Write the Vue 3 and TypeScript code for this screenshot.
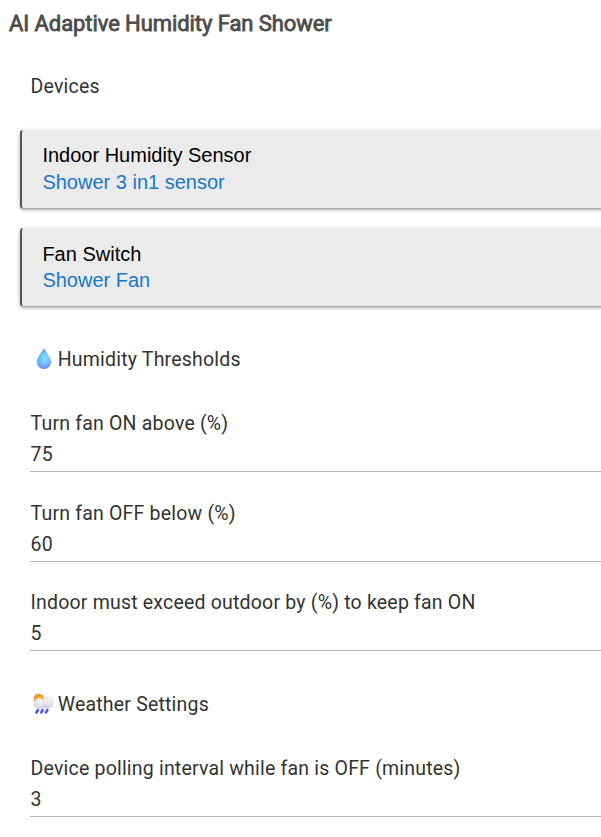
<script setup lang="ts">
interface Device {
  label: string
  value: string
}

interface Setting {
  label: string
  value: number
}

const devices: Device[] = [
  { label: 'Indoor Humidity Sensor', value: 'Shower 3 in1 sensor' },
  { label: 'Fan Switch', value: 'Shower Fan' },
]

const thresholds: Setting[] = [
  { label: 'Turn fan ON above (%)', value: 75 },
  { label: 'Turn fan OFF below (%)', value: 60 },
  { label: 'Indoor must exceed outdoor by (%) to keep fan ON', value: 5 },
]

const weather: Setting[] = [
  { label: 'Device polling interval while fan is OFF (minutes)', value: 3 },
]
</script>

<template>
  <main class="page">
    <h1 class="title">AI Adaptive Humidity Fan Shower</h1>

    <h2 class="section devices-heading">Devices</h2>
    <div class="devices">
      <button v-for="d in devices" :key="d.label" class="device" type="button">
        <span class="device-label">{{ d.label }}</span>
        <span class="device-value">{{ d.value }}</span>
      </button>
    </div>

    <h2 class="section icon-section humidity-heading">
      <svg class="icon" width="27" height="24" viewBox="0 0 27 24" aria-hidden="true">
        <defs>
          <linearGradient id="drop" x1="0.3" y1="0" x2="0.6" y2="1">
            <stop offset="0" stop-color="#559fd6" />
            <stop offset="0.55" stop-color="#5cbcfb" />
            <stop offset="0.8" stop-color="#6f9cfb" />
            <stop offset="1" stop-color="#7a7ffb" />
          </linearGradient>
          <radialGradient id="glow" cx="0.58" cy="0.48" r="0.45">
            <stop offset="0" stop-color="#84dcff" />
            <stop offset="0.5" stop-color="#80d8ff" stop-opacity="0.75" />
            <stop offset="1" stop-color="#79d5ff" stop-opacity="0" />
          </radialGradient>
        </defs>
        <path d="M13.9 2C14.5 2 14.8 2.5 15.2 3.2C17 6.5 21 11 21 15.1C21 19.3 17.8 22 13.9 22C10 22 6.8 19.3 6.8 15.1C6.8 11 10.8 6.5 12.6 3.2C13 2.5 13.3 2 13.9 2Z" fill="url(#drop)" />
        <path d="M13.9 2C14.5 2 14.8 2.5 15.2 3.2C17 6.5 21 11 21 15.1C21 19.3 17.8 22 13.9 22C10 22 6.8 19.3 6.8 15.1C6.8 11 10.8 6.5 12.6 3.2C13 2.5 13.3 2 13.9 2Z" fill="url(#glow)" />
      </svg>
      <span>Humidity Thresholds</span>
    </h2>
    <div class="fields">
      <label v-for="s in thresholds" :key="s.label" class="field">
        <span>{{ s.label }}</span>
        <span class="value">{{ s.value }}</span>
      </label>
    </div>

    <h2 class="section icon-section weather-heading">
      <svg class="icon" width="27" height="24" viewBox="0 0 27 24" aria-hidden="true">
        <defs>
          <radialGradient id="sun" cx="0.6" cy="0.6" r="0.6">
            <stop offset="0" stop-color="#ffd23e" />
            <stop offset="1" stop-color="#f28a20" />
          </radialGradient>
          <radialGradient id="puff" cx="0.6" cy="0.28" r="0.75">
            <stop offset="0" stop-color="#f8f7f8" />
            <stop offset="0.6" stop-color="#e6e3ea" />
            <stop offset="1" stop-color="#cfc5ea" />
          </radialGradient>
        </defs>
        <g transform="translate(0 -0.4)">
          <circle cx="8.8" cy="7.3" r="4.7" fill="url(#sun)" />
          <circle cx="8.8" cy="7.3" r="4.9" fill="none" stroke="#f09330" stroke-width="1.1" stroke-dasharray="1.8 1.35" />
          <rect x="4" y="8.5" width="19" height="8.5" rx="4.25" fill="#dcd5ee" />
          <circle cx="17.9" cy="10.3" r="5.8" fill="url(#puff)" />
          <circle cx="9" cy="11.8" r="5.1" fill="url(#puff)" />
          <path d="M7.9 18.4L6.4 20.9M12.7 18.4L11.2 20.9M17.4 18.4L15.9 20.9" stroke="#4b5be8" stroke-width="2.6" stroke-linecap="round" />
        </g>
      </svg>
      <span>Weather Settings</span>
    </h2>
    <div class="fields">
      <label v-for="s in weather" :key="s.label" class="field">
        <span>{{ s.label }}</span>
        <span class="value">{{ s.value }}</span>
      </label>
    </div>
  </main>
</template>

<style>
body {
  background: #fff;
  overflow: hidden;
}
</style>

<style scoped>
.page {
  box-sizing: border-box;
  height: 837px;
  overflow: hidden;
  padding-top: 10px;
  font-family: Roboto, sans-serif;
  font-size: 19.5px;
  line-height: 25px;
  letter-spacing: 0.2px;
  color: #333;
}

.title {
  margin: 0;
  padding-left: 9px;
  font-size: 22px;
  line-height: 28px;
  font-weight: 400;
  letter-spacing: -0.08px;
  color: #4d4d4d;
  -webkit-text-stroke: 0.8px #4d4d4d;
}

.section {
  display: flex;
  margin: 0;
  padding-left: 30.5px;
  font-size: inherit;
  font-weight: 400;
  white-space: nowrap;
}

.icon-section {
  padding-left: 30px;
}

.devices-heading {
  margin-top: 36px;
}

.devices {
  display: flex;
  flex-direction: column;
  gap: 19.6px;
  margin: 30.6px 0 0 20px;
}

.device {
  box-sizing: border-box;
  display: flex;
  flex-direction: column;
  justify-content: flex-start;
  width: 610px;
  height: 78.6px;
  padding: 12.8px 20.4px 0;
  border: 0;
  border-left: 2px solid #555;
  border-radius: 3px;
  background: #ebebeb;
  box-shadow: 0 1px 0 #aaa, 0 2px 3px rgba(0, 0, 0, 0.25), 0 1px 6px rgba(0, 0, 0, 0.12);
  font-family: "Liberation Sans", Arial, sans-serif;
  font-size: 20px;
  line-height: 26.4px;
  letter-spacing: 0;
  text-align: left;
}

.device-label {
  color: #000;
}

.device-value {
  color: #1a77c9;
}

.humidity-heading {
  margin-top: 40.6px;
}

.weather-heading {
  margin-top: 40.8px;
}

.icon {
  flex: none;
  margin-right: 0.7px;
}

.fields {
  display: flex;
  flex-direction: column;
  gap: 28.6px;
  margin: 39px 0 0 30px;
}

.field {
  box-sizing: border-box;
  display: flex;
  flex-direction: column;
  gap: 6px;
  height: 61px;
  padding-left: 0.5px;
  border-bottom: 1px solid #b9b9b9;
  white-space: nowrap;
}
</style>
